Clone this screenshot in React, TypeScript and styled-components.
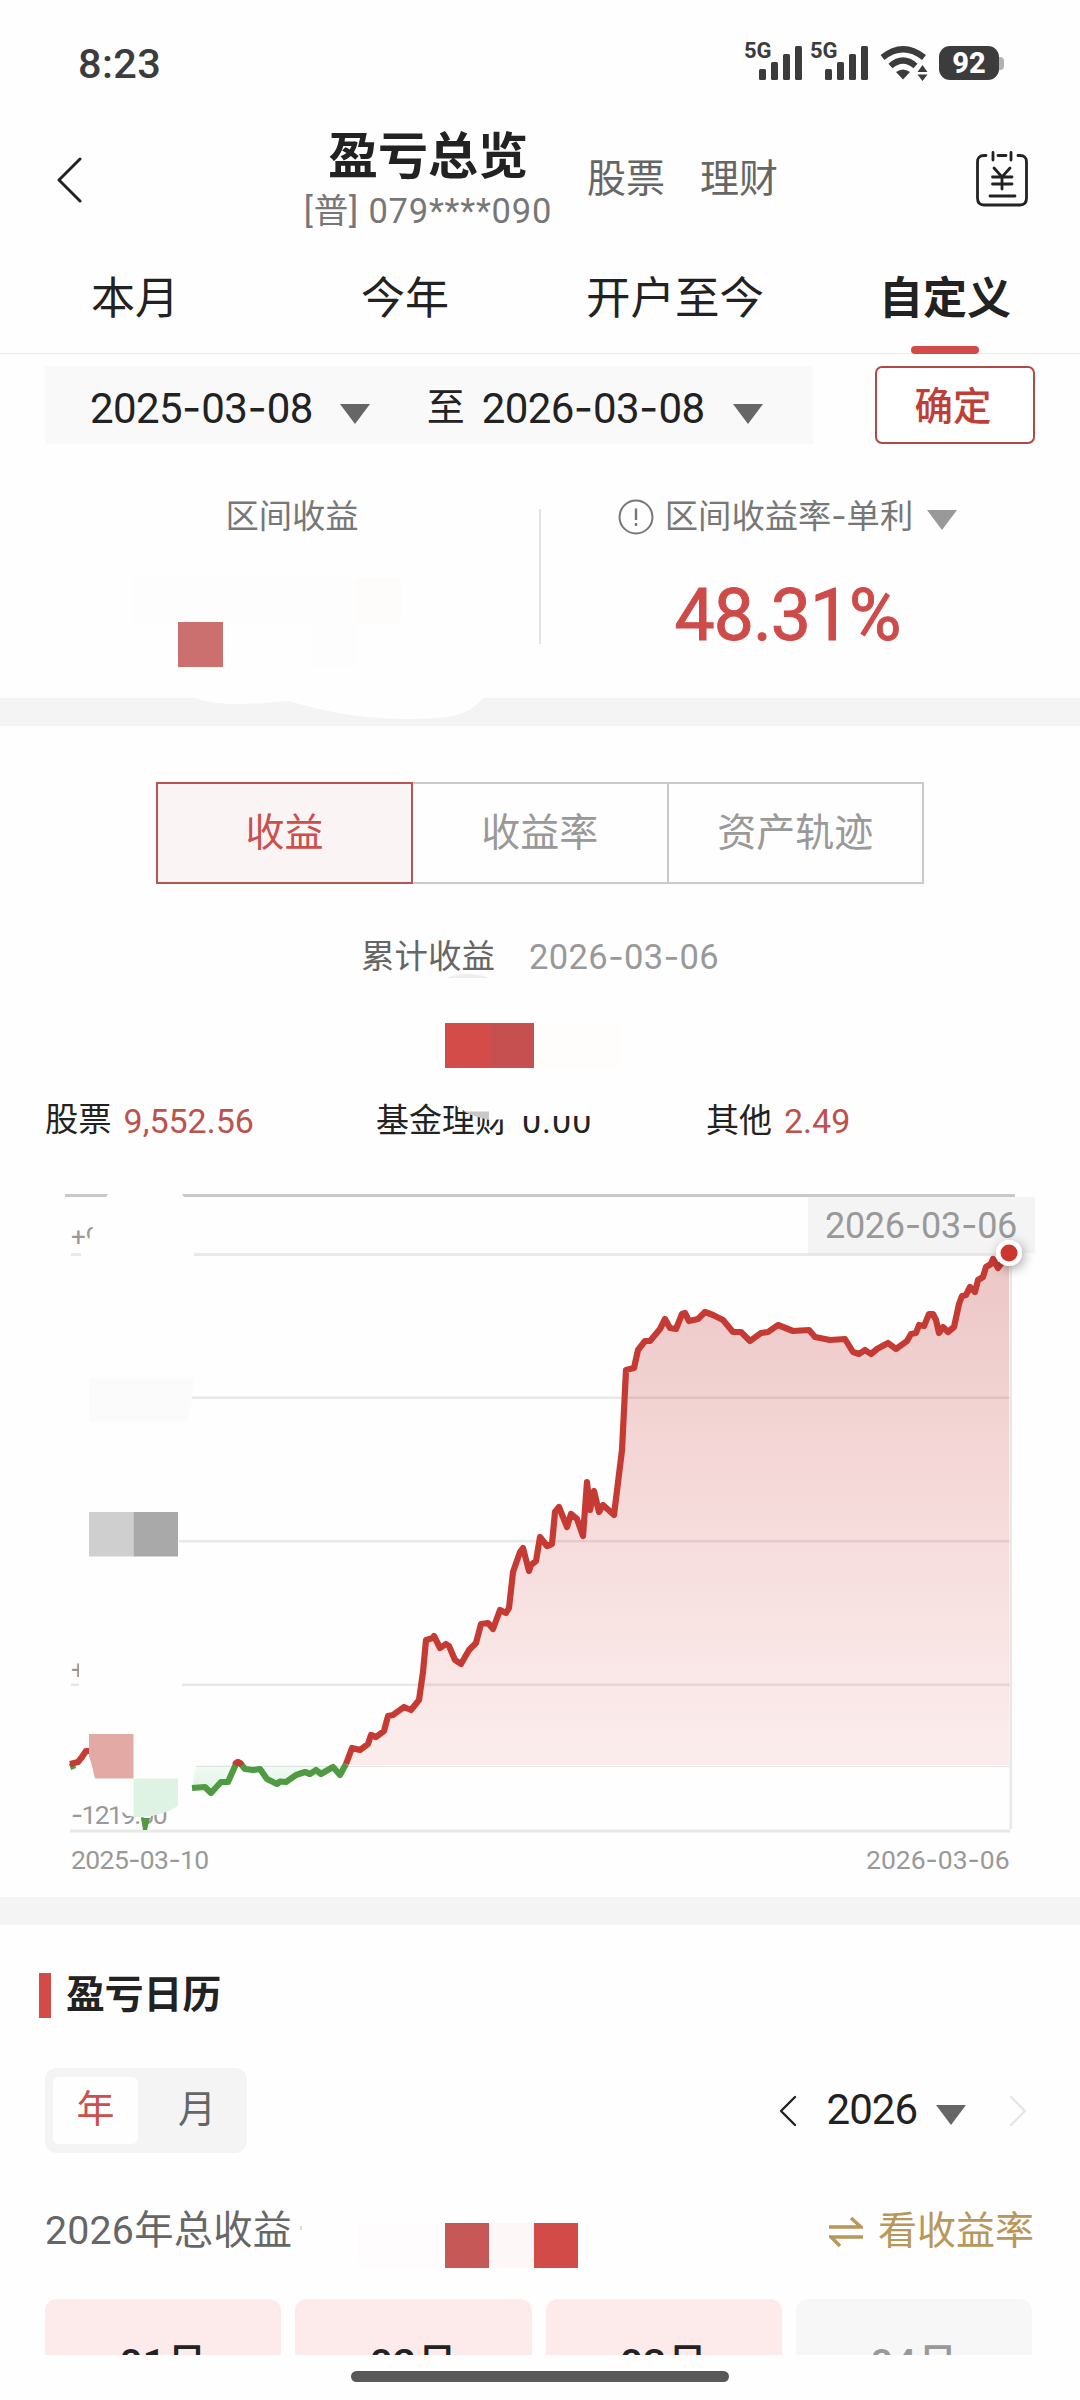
import React from 'react';
import styled, { createGlobalStyle } from 'styled-components';

const Global = createGlobalStyle`
  * { box-sizing: border-box; }
  html, body { margin: 0; padding: 0; background: #fefefe; }
  body { font-family: Roboto, "Noto Sans CJK SC", sans-serif; color: #222; }
`;

const Screen = styled.div`
  width: 1080px;
  height: 2400px;
  overflow: hidden;
  background: #fefefe;
  display: flex;
  flex-direction: column;
`;

const Text = styled.span<{ $size: number; $color?: string; $weight?: number; $track?: number; $dy?: number; $ml?: number; $mr?: number }>`
  display: block;
  white-space: nowrap;
  line-height: 1;
  font-size: ${p => p.$size}px;
  color: ${p => p.$color ?? '#222'};
  font-weight: ${p => p.$weight ?? 400};
  letter-spacing: ${p => p.$track ?? 0}px;
  margin: ${p => p.$dy ?? 0}px ${p => p.$mr ?? 0}px 0 ${p => p.$ml ?? 0}px;
`;

const Dash = styled.span`
  font-family: Inter, sans-serif;
  letter-spacing: 0;
`;

const withDashes = (value: string) =>
  value.split('-').map((part, i) => (
    <React.Fragment key={i}>
      {i > 0 && <Dash>-</Dash>}
      {part}
    </React.Fragment>
  ));

/* ---------- status bar ---------- */

const StatusBar = styled.header`
  height: 120px;
  flex: none;
  display: flex;
  justify-content: space-between;
  padding: 0 76px 0 78px;
`;

const Clock = styled(Text)`
  padding-top: 43px;
`;

const StatusIcons = styled.div`
  display: flex;
  align-items: flex-start;
  padding-top: 40px;
`;

const Signal = styled.div`
  display: flex;
  width: 66px;
`;

const Network = styled(Text)`
  width: 15px;
`;

const WifiWrap = styled.div`
  display: flex;
  margin-left: 4px;
`;

const BatteryWrap = styled.div`
  display: flex;
  align-items: center;
  margin: 6px 0 0 11px;
`;

const BatteryBody = styled.div`
  width: 60px;
  height: 34px;
  border-radius: 11px;
  background: #3c3c3c;
  display: flex;
  align-items: center;
  justify-content: center;
`;

const BatteryTip = styled.div`
  width: 5px;
  height: 13px;
  border-radius: 0 4px 4px 0;
  background: #b2b2b2;
`;

const SignalBars = () => (
  <svg width="44" height="42" viewBox="0 0 44 42" fill="#3c3c3c">
    <rect x="0" y="29" width="7" height="11" rx="1.5" />
    <rect x="12" y="22" width="7" height="18" rx="1.5" />
    <rect x="24" y="14" width="7" height="26" rx="1.5" />
    <rect x="36" y="6" width="7" height="34" rx="1.5" />
  </svg>
);

const Wifi = () => (
  <svg width="48" height="42" viewBox="0 0 48 42" fill="none" stroke="#3c3c3c" strokeWidth="6.2">
    <path d="M2.5 17.5 Q23 1 44 17.5" />
    <path d="M10.5 26 Q23 15 35.5 26" />
    <path d="M16 32 Q23 27 30 32 L23 39.5Z" fill="#3c3c3c" stroke="none" />
    <path d="M37.5 32 L42.5 25 L47.5 32Z M37.5 34.5 L47.5 34.5 L42.5 41Z" fill="#3c3c3c" stroke="none" />
  </svg>
);

/* ---------- title bar ---------- */

const TitleBar = styled.div`
  height: 120px;
  flex: none;
  display: grid;
  grid-template-columns: 305px 282px 113px 276px 104px;
`;

const BackCell = styled.div`
  padding: 37px 0 0 57px;
`;

const TitleCell = styled.div`
  display: flex;
  flex-direction: column;
  width: 246px;
  align-items: center;
  padding-top: 12px;
`;

const TitleLink = styled(Text)`
  padding-top: 40px;
`;

const BillCell = styled.div`
  padding-top: 31px;
`;

/* ---------- period tabs ---------- */

const PeriodTabs = styled.nav`
  height: 114px;
  flex: none;
  display: grid;
  grid-template-columns: repeat(4, 1fr);
  border-bottom: 1px solid #ebebeb;
`;

const PeriodTab = styled.div`
  display: flex;
  flex-direction: column;
  align-items: center;
  justify-content: space-between;
  padding-top: 37px;
`;

const TabMark = styled.div`
  width: 68px;
  height: 8px;
  margin-bottom: -1px;
  border-radius: 4px;
  background: #d34b48;
`;

/* ---------- range picker ---------- */

const RangeRow = styled.div`
  height: 90px;
  flex: none;
  display: flex;
  justify-content: space-between;
  padding: 12px 45px 0 45px;
`;

const RangeBox = styled.div`
  width: 768px;
  height: 78px;
  background: #f9f9f9;
  display: flex;
  align-items: center;
  padding-left: 45px;
`;

const Caret = styled.i<{ $color: string; $ml: number; $mr?: number; $mt?: number }>`
  width: 0;
  height: 0;
  border: 15.5px solid transparent;
  border-top: 20px solid ${p => p.$color};
  border-bottom: 0;
  margin: ${p => p.$mt ?? 16}px ${p => p.$mr ?? 0}px 0 ${p => p.$ml}px;
`;

const ConfirmButton = styled.button`
  width: 160px;
  height: 78px;
  border: 2px solid #b04a45;
  border-radius: 7px;
  background: #fff;
  padding: 0 4px 0 0;
  font-family: inherit;
  display: flex;
  align-items: center;
  justify-content: center;
`;

/* ---------- summary ---------- */

const Summary = styled.section`
  height: 254px;
  flex: none;
  position: relative;
  display: grid;
  grid-template-columns: 539px 2px 539px;
`;

const SummaryCell = styled.div<{ $pl?: number; $pr?: number }>`
  display: flex;
  flex-direction: column;
  align-items: center;
  padding: 56px ${p => p.$pr ?? 0}px 0 ${p => p.$pl ?? 0}px;
`;

const SummaryRule = styled.div`
  height: 135px;
  margin-top: 65px;
  background: #e3e3e3;
`;

const LabelRow = styled.div`
  display: flex;
  align-items: center;
  height: 34px;
`;

const Rate = styled(Text)`
  -webkit-text-stroke: 1px #cd4b49;
`;

const Mosaic = styled.div<{ $x: number; $y: number; $c: string; $w?: number; $h?: number }>`
  position: absolute;
  left: ${p => p.$x}px;
  top: ${p => p.$y}px;
  width: ${p => p.$w ?? 45}px;
  height: ${p => p.$h ?? 45}px;
  background: ${p => p.$c};
`;

const Band = styled.div`
  height: 28px;
  flex: none;
  background: #f4f4f4;
  overflow: hidden;
`;

/* ---------- profit panel ---------- */

const Panel = styled.section`
  height: 468px;
  flex: none;
  position: relative;
  display: flex;
  flex-direction: column;
  align-items: center;
  padding-top: 56px;
`;

const Segments = styled.div`
  display: flex;
  width: 768px;
  height: 102px;
`;

const Segment = styled.div<{ $active?: boolean }>`
  flex: ${p => (p.$active ? '0 0 257px' : '1')};
  border: 2px solid ${p => (p.$active ? '#bb5451' : '#cbcbcb')};
  ${p => (p.$active ? '' : 'border-left: 0;')}
  background: ${p => (p.$active ? '#faf4f4' : 'transparent')};
  display: flex;
  align-items: center;
  justify-content: center;
`;

const CumulativeRow = styled.div`
  display: flex;
  align-items: center;
  height: 34px;
  gap: 34px;
  margin-top: 56px;
`;

const Breakdown = styled.div`
  display: grid;
  grid-template-columns: 331px 330px 1fr;
  width: 990px;
  margin-top: 129px;
`;

const BreakdownItem = styled.div`
  display: flex;
  align-items: center;
  gap: 12px;
  height: 34px;
`;

const Smudge = styled.svg`
  position: absolute;
  left: 340px;
  top: 240px;
`;

/* ---------- chart ---------- */

const ChartArea = styled.section`
  height: 703px;
  flex: none;
`;

const curve: [number, number][] = [
  [346, 1764], [352, 1748], [360, 1750], [368, 1744], [371, 1735], [376, 1737], [384, 1731], [388, 1716], [393, 1715],
  [404, 1707], [411, 1710], [419, 1700], [423, 1672], [426, 1640], [433, 1638], [434, 1636], [440, 1648], [446, 1644],
  [449, 1646], [455, 1660], [461, 1664], [469, 1650], [476, 1643], [481, 1624], [488, 1623], [493, 1629], [500, 1610],
  [506, 1613], [509, 1608], [513, 1572], [520, 1552], [523, 1548], [529, 1571], [531, 1565], [536, 1561], [540, 1537],
  [547, 1546], [552, 1544], [555, 1512], [559, 1507], [567, 1527], [571, 1514], [577, 1519], [583, 1536], [587, 1482],
  [590, 1510], [594, 1491], [599, 1512], [603, 1505], [614, 1515], [622, 1450], [626, 1370], [634, 1368], [638, 1350],
  [645, 1341], [650, 1341], [660, 1329], [665, 1319], [670, 1328], [676, 1329], [682, 1314], [685, 1313], [689, 1321],
  [698, 1319], [705, 1312], [713, 1315], [723, 1320], [733, 1332], [741, 1332], [750, 1341], [761, 1333], [768, 1332],
  [778, 1325], [793, 1331], [809, 1330], [815, 1337], [830, 1340], [845, 1339], [853, 1352], [859, 1354], [865, 1350],
  [871, 1354], [877, 1349], [888, 1343], [896, 1349], [907, 1341], [911, 1334], [916, 1333], [919, 1325], [924, 1326],
  [929, 1314], [933, 1314], [936, 1320], [939, 1333], [943, 1327], [948, 1332], [954, 1327], [959, 1304], [962, 1296],
  [966, 1295], [970, 1287], [975, 1292], [978, 1280], [983, 1277], [986, 1267], [991, 1264], [993, 1259], [998, 1268],
  [1009, 1253],
];

const dip: [number, number][] = [
  [192, 1788], [205, 1787], [211, 1793], [221, 1782], [228, 1782], [236, 1764], [238, 1762], [241, 1764], [245, 1769],
  [253, 1770], [260, 1769], [267, 1779], [277, 1784], [280, 1781.5], [286, 1782], [296, 1775], [305, 1772], [310, 1774],
  [316, 1770], [321, 1774], [333, 1767], [340, 1775], [346, 1764],
];

const toPoints = (pts: [number, number][]) => pts.map(p => p.join(',')).join(' ');

const ChartText = ({ x, y, size, track, children }: { x: number; y: number; size: number; track?: number; children: string }) => (
  <text x={x} y={y} fontSize={size} fill="#999" letterSpacing={track}>
    {children.split('-').map((part, i) => (
      <React.Fragment key={i}>
        {i > 0 && <tspan fontFamily="Inter, sans-serif">-</tspan>}
        {part}
      </React.Fragment>
    ))}
  </text>
);

const Chart = () => (
  <svg width="1080" height="703" viewBox="0 1194 1080 703" fontFamily='Roboto, "Noto Sans CJK SC", sans-serif'>
    <defs>
      <linearGradient id="gain" gradientUnits="userSpaceOnUse" x1="0" y1="1253" x2="0" y2="1765">
        <stop offset="0" stopColor="#b8302c" stopOpacity="0.27" />
        <stop offset="0.5" stopColor="#d03a38" stopOpacity="0.18" />
        <stop offset="1" stopColor="#e04040" stopOpacity="0.09" />
      </linearGradient>
      <linearGradient id="loss" gradientUnits="userSpaceOnUse" x1="0" y1="1765" x2="0" y2="1795">
        <stop offset="0" stopColor="#3cb865" stopOpacity="0.05" />
        <stop offset="1" stopColor="#3cb865" stopOpacity="0.18" />
      </linearGradient>
      <filter id="lift" x="-100%" y="-100%" width="300%" height="300%">
        <feDropShadow dx="2" dy="3" stdDeviation="6" floodColor="#000" floodOpacity="0.35" />
      </filter>
    </defs>

    <path d="M65 1194H108L106 1197H65Z M182 1194H1015V1197H184Z" fill="#c9c9c9" />
    <g fill="#e8e8e8">
      <rect x="71" y="1253" width="10" height="3" />
      <rect x="194" y="1253" width="816" height="3" />
      <rect x="192" y="1396.5" width="818" height="2.5" />
      <rect x="179" y="1540" width="831" height="2.5" />
      <rect x="71" y="1683.5" width="8" height="2.5" />
      <rect x="182" y="1683.5" width="828" height="2.5" />
      <rect x="196" y="1766" width="814" height="1" />
      <rect x="70" y="1829.5" width="940" height="3" />
      <rect x="1009.5" y="1256" width="2.5" height="573" />
    </g>

    <polygon points={`346,1765 ${toPoints(curve)} 1009,1765`} fill="url(#gain)" />
    <polygon points={`196,1765 ${toPoints(dip)} 346,1765`} fill="url(#loss)" />
    <g fill="none" strokeWidth="6.2" strokeLinejoin="round">
      <polyline points={toPoints(dip)} stroke="#4f9a43" />
      <polyline points="235,1765 236,1763 238,1762 240,1763 242,1765" stroke="#c43d35" />
      <polyline points={toPoints(curve)} stroke="#c53a33" />
      <polyline points="70,1767 75,1765" stroke="#4f9a43" />
      <polyline points="70,1764 78,1762 82,1757 86,1751 89,1751" stroke="#c43d35" />
    </g>

    <ChartText x={71} y={1246} size={26}>+9</ChartText>
    <ChartText x={71} y={1679} size={26}>+</ChartText>
    <ChartText x={71} y={1824} size={26.5} track={-1.7}>-1219.00</ChartText>
    <ChartText x={71} y={1869} size={26.5} track={-0.6}>2025-03-10</ChartText>
    <ChartText x={866} y={1869} size={26.5}>2026-03-06</ChartText>
    <path d="M94 1225 Q86 1240 90 1256 L180 1256 V1222Z" fill="#fefefe" />
    <rect x="79" y="1660" width="20" height="40" fill="#fefefe" />
    <path d="M113 1800 Q120 1815 136 1817 L150 1817 L178 1800 V1795 H113Z" fill="#fefefe" />

    <path d="M89 1378H194L188 1422H89Z" fill="#fbfbfb" />
    <rect x="89" y="1512" width="44.5" height="44.5" fill="#cfcfcf" />
    <rect x="133.5" y="1512" width="44.5" height="44.5" fill="#a9a9a9" />
    <path d="M89 1734H133.5V1778.5H95Q92 1765 89 1756Z" fill="#e2a9a5" />
    <path d="M133.5 1778.5H178V1806Q160 1818 133.5 1817Z" fill="#dff3e5" />
    <path d="M141 1818H150L147 1830H143Z" fill="#4f9a43" />

    <rect x="808" y="1197" width="227" height="56" fill="#f4f4f4" />
    <ChartText x={825} y={1238} size={36} track={-0.3}>2026-03-06</ChartText>
    <circle cx="1009" cy="1253" r="13" fill="#fff" filter="url(#lift)" />
    <circle cx="1009" cy="1253" r="8.5" fill="#cb372f" />
  </svg>
);

/* ---------- calendar ---------- */

const Calendar = styled.section`
  height: 430px;
  flex: none;
  overflow: hidden;
  position: relative;
  display: flex;
  flex-direction: column;
`;

const SectionTitle = styled.div`
  display: flex;
  gap: 15px;
  margin: 48px 0 0 39px;
  height: 45px;
`;

const TitleMark = styled.div`
  width: 12px;
  height: 45px;
  background: #d34b48;
`;

const ControlRow = styled.div`
  display: flex;
  justify-content: space-between;
  margin: 50px 53px 0 45px;
  height: 85px;
`;

const Toggle = styled.div`
  width: 202px;
  padding: 9px 8px;
  border-radius: 12px;
  background: #f4f4f4;
  display: flex;
`;

const ToggleItem = styled.div<{ $active?: boolean }>`
  flex: 0 0 ${p => (p.$active ? 85 : 101)}px;
  padding: 0 0 3px ${p => (p.$active ? 0 : 17)}px;
  border-radius: 6px;
  background: ${p => (p.$active ? '#fefefe' : 'transparent')};
  display: flex;
  align-items: center;
  justify-content: center;
`;

const YearNav = styled.div`
  display: flex;
  align-items: center;
`;

const TotalRow = styled.div`
  display: flex;
  justify-content: space-between;
  margin: 57px 46px 0 45px;
  height: 40px;
`;

const RateLink = styled.div`
  display: flex;
  gap: 15px;
`;

const Months = styled.div`
  display: grid;
  grid-template-columns: repeat(4, 1fr);
  gap: 14px;
  margin: 49px 48px 0 45px;
  height: 56px;
  overflow: hidden;
`;

const Month = styled.div<{ $muted?: boolean }>`
  height: 150px;
  border-radius: 12px;
  background: ${p => (p.$muted ? '#f7f7f7' : '#fcebea')};
  display: flex;
  justify-content: center;
  padding-top: 45px;
`;

const HomeArea = styled.footer`
  flex: 1;
  display: flex;
  justify-content: center;
  padding-top: 16px;
`;

const HomeBar = styled.div`
  width: 378px;
  height: 11px;
  border-radius: 6px;
  background: #595959;
`;

const Chevron = ({ w, h, flip, color, stroke }: { w: number; h: number; flip?: boolean; color: string; stroke: number }) => (
  <svg width={w} height={h} viewBox={`0 0 ${w} ${h}`} fill="none" stroke={color} strokeWidth={stroke} strokeLinecap="round" strokeLinejoin="round">
    <path d={flip ? `M2 2L${w - 2} ${h / 2}L2 ${h - 2}` : `M${w - 2} 2L2 ${h / 2}L${w - 2} ${h - 2}`} />
  </svg>
);

export default function App() {
  return (
    <Screen>
      <Global />
      <StatusBar>
        <Clock $size={41.5} $weight={500} $color="#3c3c3c" $track={0.4}>8:23</Clock>
        <StatusIcons>
          <Signal><Network $size={22} $weight={700} $color="#3c3c3c">5G</Network><SignalBars /></Signal>
          <Signal><Network $size={22} $weight={700} $color="#3c3c3c">5G</Network><SignalBars /></Signal>
          <WifiWrap><Wifi /></WifiWrap>
          <BatteryWrap>
            <BatteryBody><Text $size={29} $weight={800} $color="#fff">92</Text></BatteryBody>
            <BatteryTip />
          </BatteryWrap>
        </StatusIcons>
      </StatusBar>

      <TitleBar>
        <BackCell><Chevron w={25} h={46} color="#222" stroke={3} /></BackCell>
        <TitleCell>
          <Text $size={50} $weight={700}>盈亏总览</Text>
          <Text $size={34.5} $color="#777" $dy={12} $track={0.8}>[普] 079****090</Text>
        </TitleCell>
        <TitleLink $size={39} $color="#666">股票</TitleLink>
        <TitleLink $size={39} $color="#666">理财</TitleLink>
        <BillCell>
          <svg width="52" height="56" viewBox="0 0 52 56" fill="none" stroke="#222" strokeWidth="2.8" strokeLinecap="round">
            <path d="M10 4.5H8Q1.5 4.5 1.5 11V47Q1.5 54 8 54H44Q50.5 54 50.5 47V11Q50.5 4.5 44 4.5H42" />
            <path d="M17 1.5V9 M35 1.5V9 M22 4.5H30" />
            <path d="M18 17L26 26L34 17 M26 26V38 M16.5 26H36 M16.5 33H36 M14 45H39" />
          </svg>
        </BillCell>
      </TitleBar>

      <PeriodTabs>
        <PeriodTab><Text $size={44}>本月</Text></PeriodTab>
        <PeriodTab><Text $size={44}>今年</Text></PeriodTab>
        <PeriodTab><Text $size={44.5}>开户至今</Text></PeriodTab>
        <PeriodTab><Text $size={44} $weight={700}>自定义</Text><TabMark /></PeriodTab>
      </PeriodTabs>

      <RangeRow>
        <RangeBox>
          <Text $size={42} $track={-0.6} $dy={6}>{withDashes('2025-03-08')}</Text>
          <Caret $color="#666" $ml={27} $mr={57} $mt={18} />
          <Text $size={38} $dy={4}>至</Text>
          <Text $size={42} $track={-0.6} $dy={6} $ml={17}>{withDashes('2026-03-08')}</Text>
          <Caret $color="#666" $ml={29} $mt={18} />
        </RangeBox>
        <ConfirmButton><Text $size={38.5} $weight={500} $color="#bf3f38" $dy={4}>确定</Text></ConfirmButton>
      </RangeRow>

      <Summary>
        <SummaryCell $pl={45}>
          <LabelRow><Text $size={33.3} $color="#777">区间收益</Text></LabelRow>
        </SummaryCell>
        <SummaryRule />
        <SummaryCell $pr={46}>
          <LabelRow>
            <svg width="36" height="36" viewBox="0 0 36 36" fill="none" stroke="#777" strokeWidth="2">
              <circle cx="18" cy="18" r="16.5" />
              <path d="M18 9.5V21 M18 24V27" strokeWidth="2.4" />
            </svg>
            <Text $size={33.3} $color="#777" $ml={11} $mr={14}>{withDashes('区间收益率-单利')}</Text>
            <Caret $color="#999" $ml={0} $mt={6} />
          </LabelRow>
          <Rate $size={71.5} $color="#cd4b49" $dy={46} $track={-1}>48.31%</Rate>
        </SummaryCell>
        <Mosaic $x={133} $y={134} $w={268} $c="#fefdfd" />
        <Mosaic $x={356} $y={134} $c="#fefcfb" />
        <Mosaic $x={178} $y={178} $c="#cb706e" />
        <Mosaic $x={312} $y={178} $c="#fdfdfd" />
      </Summary>

      <Band>
        <svg width="1080" height="28" viewBox="0 0 1080 28">
          <path d="M196 0C214 8 250 7 289 3C330 15 360 20 405 21C450 21 468 18 483 0Z" fill="#fefefe" />
        </svg>
      </Band>

      <Panel>
        <Segments>
          <Segment $active><Text $size={39} $color="#cb4f4c">收益</Text></Segment>
          <Segment><Text $size={39} $color="#999">收益率</Text></Segment>
          <Segment><Text $size={39} $color="#999">资产轨迹</Text></Segment>
        </Segments>
        <CumulativeRow>
          <Text $size={33.5} $color="#666">累计收益</Text>
          <Text $size={34.5} $color="#999" $track={0.4}>{withDashes('2026-03-06')}</Text>
        </CumulativeRow>
        <Breakdown>
          <BreakdownItem><Text $size={33.3}>股票</Text><Text $size={34} $color="#bd514e" $dy={2}>9,552.56</Text></BreakdownItem>
          <BreakdownItem><Text $size={33}>基金理财</Text><Text $size={34} $track={1} $ml={2} $dy={2}>0.00</Text></BreakdownItem>
          <BreakdownItem><Text $size={33}>其他</Text><Text $size={34} $color="#bd514e" $dy={2}>2.49</Text></BreakdownItem>
        </Breakdown>
        <Mosaic $x={445} $y={297} $c="#d34c4a" />
        <Mosaic $x={490} $y={297} $w={44} $c="#c6504f" />
        <Mosaic $x={534} $y={297} $w={87} $c="#fefdfc" />
        <Smudge width="300" height="180" viewBox="340 966 300 180">
          <path d="M446 978Q467 970 490 978Z" fill="#eee" />
          <path d="M457 1098H605V1116H520L506 1119.5H489L472 1115L457 1107Z" fill="#fefefe" />
          <path d="M463 1111.5H489V1120L476 1116.5Z" fill="#c8c8c8" />
        </Smudge>
      </Panel>

      <ChartArea><Chart /></ChartArea>
      <Band />

      <Calendar>
        <SectionTitle><TitleMark /><Text $size={38.8} $weight={700} $dy={3}>盈亏日历</Text></SectionTitle>
        <ControlRow>
          <Toggle>
            <ToggleItem $active><Text $size={38} $color="#cb4f4c">年</Text></ToggleItem>
            <ToggleItem><Text $size={38} $color="#666">月</Text></ToggleItem>
          </Toggle>
          <YearNav>
            <Chevron w={18} h={32} color="#222" stroke={2.4} />
            <Text $size={42} $track={-1} $ml={30} $mr={19} $dy={-2}>2026</Text>
            <Caret $color="#666" $ml={0} $mr={43} $mt={8} />
            <Chevron w={18} h={32} color="#e4e4e4" stroke={2} flip />
          </YearNav>
        </ControlRow>
        <TotalRow>
          <Text $size={39.3} $color="#666" $track={0.2} $dy={2}>2026年总收益</Text>
          <RateLink>
            <svg width="34" height="40" viewBox="0 0 34 40" fill="none" stroke="#b8975a" strokeWidth="3.4">
              <path d="M0 17H32L22 8 M34 27H2L11 36" />
            </svg>
            <Text $size={39} $color="#b8975a" $dy={2}>看收益率</Text>
          </RateLink>
        </TotalRow>
        <Months>
          <Month><Text $size={41} $weight={500}>01月</Text></Month>
          <Month><Text $size={41} $weight={500}>02月</Text></Month>
          <Month><Text $size={41} $weight={500}>03月</Text></Month>
          <Month $muted><Text $size={41} $weight={500} $color="#999">04月</Text></Month>
        </Months>
        <Mosaic $x={357} $y={298} $w={88} $c="#fefcfc" />
        <Mosaic $x={445} $y={298} $w={44} $c="#c65957" />
        <Mosaic $x={489} $y={298} $c="#fdf7f7" />
        <Mosaic $x={534} $y={298} $w={44} $c="#d34b48" />
        <Mosaic $x={300} $y={301} $w={2} $h={4} $c="#ddd" />
      </Calendar>

      <HomeArea><HomeBar /></HomeArea>
    </Screen>
  );
}
